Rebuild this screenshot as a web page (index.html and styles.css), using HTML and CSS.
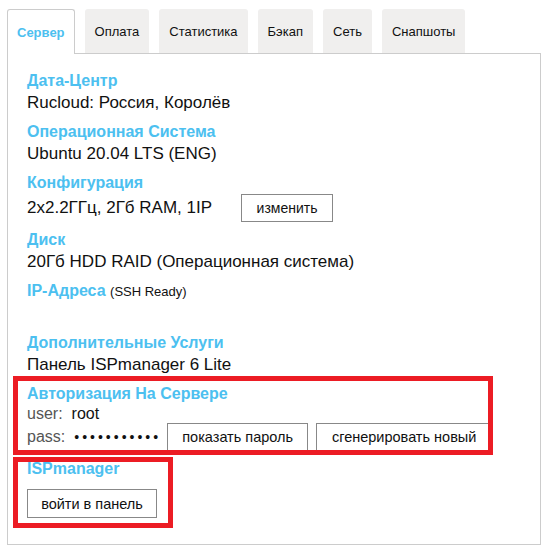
FILE: index.html
```html
<!DOCTYPE html>
<html lang="ru">
<head>
  <meta charset="UTF-8" />
  <meta name="viewport" content="width=device-width, initial-scale=1.0" />
  <title>Сервер</title>
  <link rel="stylesheet" href="styles.css">
</head>
<body>
  <div class="wrap">
    <ul class="tabs">
      <li class="tab active">Сервер</li>
      <li class="tab">Оплата</li>
      <li class="tab">Статистика</li>
      <li class="tab">Бэкап</li>
      <li class="tab">Сеть</li>
      <li class="tab">Снапшоты</li>
    </ul>

    <div class="panel">
      <div class="block">
        <div class="label">Дата-Центр</div>
        <div class="value">Rucloud: Россия, Королёв</div>
      </div>
      <div class="block">
        <div class="label">Операционная Система</div>
        <div class="value">Ubuntu 20.04 LTS (ENG)</div>
      </div>
      <div class="block">
        <div class="label">Конфигурация</div>
        <div class="value row">
          <span>2x2.2ГГц, 2Гб RAM, 1IP</span>
          <button class="btn btn-change">изменить</button>
        </div>
      </div>
      <div class="block">
        <div class="label">Диск</div>
        <div class="value">20Гб HDD RAID (Операционная система)</div>
      </div>
      <div class="block">
        <div class="label">IP-Адреса <span class="note">(SSH Ready)</span></div>
        <div class="value"></div>
      </div>
      <div class="block">
        <div class="label">Дополнительные Услуги</div>
        <div class="value">Панель ISPmanager 6 Lite</div>
      </div>

      <div class="block marked auth">
        <div class="label">Авторизация На Сервере</div>
        <div class="cred user"><span class="key">user:</span> root</div>
        <div class="cred pass">
          <span class="key">pass:</span>
          <span class="dots">•••••••••••</span>
          <button class="btn btn-show">показать пароль</button>
          <button class="btn btn-gen">сгенерировать новый</button>
        </div>
      </div>

      <div class="block marked isp">
        <div class="label">ISPmanager</div>
        <button class="btn btn-login">войти в панель</button>
      </div>
    </div>
  </div>
</body>
</html>
```

FILE: styles.css
```css
body {
  margin: 0;
  font-family: "Liberation Sans", Arial, sans-serif;
  color: #111;
  background: #fff;
}

.wrap {
  padding: 9px 8px 8px 7px;
}

.tabs {
  display: flex;
  list-style: none;
  margin: 0;
  padding: 0;
  gap: 10px;
}

.tab {
  height: 44px;
  line-height: 46px;
  padding: 0 10px;
  font-size: 13px;
  background: #f0efee;
  border-radius: 3px 3px 0 0;
  box-sizing: border-box;
}

.tab.active {
  background: #fff;
  color: #4cc0f0;
  font-weight: bold;
  border: 1px solid #ccc;
  border-bottom: none;
  height: 45px;
  margin-bottom: -1px;
  padding: 0 9px;
  position: relative;
  z-index: 1;
  line-height: 45px;
}

.panel {
  border: 1px solid #ccc;
  padding: 16px 19px 19px 19px;
}

.block {
  margin-bottom: 7px;
}

.label {
  font-size: 16px;
  font-weight: bold;
  color: #4cc0f0;
  line-height: 22px;
}

.note {
  font-size: 13px;
  font-weight: normal;
  color: #111;
}

.value {
  font-size: 17px;
  line-height: 22px;
  min-height: 22px;
}

.row {
  display: flex;
  align-items: center;
  gap: 29px;
}

.btn {
  font-family: "Liberation Sans", Arial, sans-serif;
  font-size: 14.5px;
  color: #111;
  background: #fff;
  border: 1px solid #888;
  border-radius: 0;
  padding: 0;
  height: 28px;
  cursor: pointer;
}

.btn-change {
  width: 92px;
  font-size: 14px;
}

.cred {
  display: flex;
  align-items: center;
  font-size: 16px;
}

.cred.user {
  line-height: 18px;
}

.key {
  color: #555;
  margin-right: 9px;
}

.dots {
  font-size: 14px;
  letter-spacing: 3px;
  margin-right: 6px;
}

.btn-show {
  width: 141px;
  margin-right: 8px;
}

.btn-gen {
  width: 176px;
}

.btn-login {
  width: 130px;
  height: 29px;
  margin-top: 9px;
}

.marked {
  position: relative;
}

.marked::after {
  content: "";
  position: absolute;
  border: 5px solid #ec1c24;
  pointer-events: none;
}

.auth::after {
  top: -7px;
  left: -14px;
  width: 470px;
  height: 69px;
}

.isp::after {
  top: -1px;
  left: -14px;
  width: 150px;
  height: 61px;
}
```
